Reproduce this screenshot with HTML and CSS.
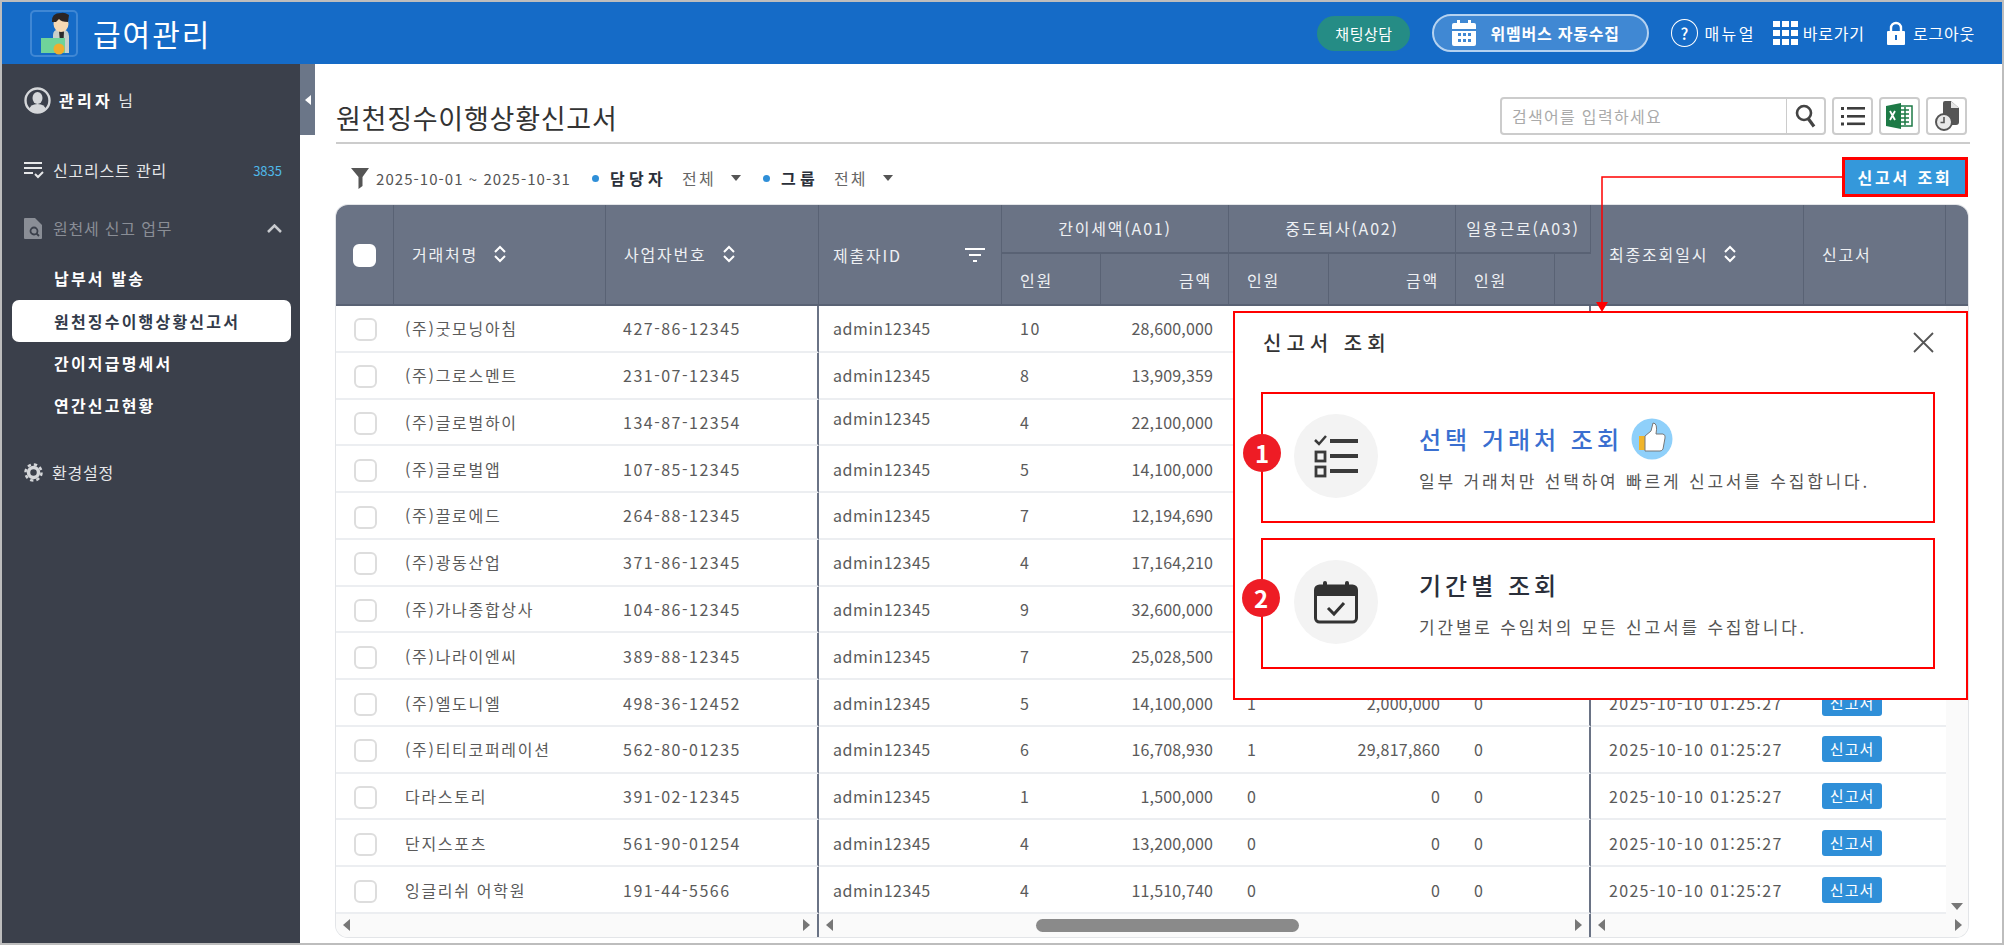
FILE: index.html
```html
<!DOCTYPE html>
<html lang="ko">
<head>
<meta charset="utf-8">
<title>급여관리</title>
<link rel="stylesheet" href="styles.css">
</head>
<body>
<div class="frame">
  <header class="topbar">
    <div class="brand">
      <span class="logo">
        <svg width="44" height="43" viewBox="0 0 44 43"><path d="M21 41V23q0-5 6-6h3q7 1 7 7v17z" fill="#c9cfca"/><path d="M27 19l2 22h2l1-22z" fill="#2b2b2b"/><ellipse cx="29" cy="12" rx="7.5" ry="8" fill="#f6d9b4"/><path d="M20 10q-1-9 9-9 3-1 8 2l-1 7q-7 0-9-3l-3 3z" fill="#2b2424"/><rect x="9" y="26" width="24" height="15" fill="#6fd39a"/><circle cx="27" cy="37" r="5.5" fill="#f0ad2e"/></svg>
      </span>
      <span class="app-name">급여관리</span>
    </div>
    <div class="top-actions">
      <span class="chat-pill">채팅상담</span>
      <span class="collect-pill">
        <svg width="24" height="26" viewBox="0 0 24 26"><path d="M5 0h3v4H5zM16 0h3v4h-3z" fill="#fff"/><path d="M0 5q0-2 2-2h20q2 0 2 2v4H0z" fill="#fff"/><path d="M0 11h24v13q0 2-2 2H2q-2 0-2-2z" fill="#fff"/><g fill="#4088d3"><rect x="6" y="13" width="3" height="3"/><rect x="11" y="13" width="3" height="3"/><rect x="16" y="13" width="3" height="3"/><rect x="6" y="19" width="3" height="3"/><rect x="11" y="19" width="3" height="3"/><rect x="16" y="19" width="3" height="3"/></g></svg>
        <span>위멤버스 자동수집</span>
      </span>
      <span class="top-link link-help"><span class="help-mark">?</span><span class="help-text">매뉴얼</span></span>
      <span class="top-link link-go">
        <svg width="25" height="24" viewBox="0 0 25 24" fill="#fff"><rect width="7" height="6"/><rect x="9" width="7" height="6"/><rect x="18" width="7" height="6"/><rect y="9" width="7" height="6"/><rect x="9" y="9" width="7" height="6"/><rect x="18" y="9" width="7" height="6"/><rect y="18" width="7" height="6"/><rect x="9" y="18" width="7" height="6"/><rect x="18" y="18" width="7" height="6"/></svg>
        바로가기
      </span>
      <span class="top-link link-out">
        <svg width="18" height="24" viewBox="0 0 18 24"><path d="M4 11V7a5 5 0 0 1 10 0v4" fill="none" stroke="#fff" stroke-width="2.4"/><rect y="10" width="18" height="14" rx="1" fill="#fff"/><rect x="8" y="14" width="2" height="5" fill="#156bc7"/></svg>
        로그아웃
      </span>
    </div>
  </header>

  <div class="body-row">
    <aside class="sidebar">
      <div class="nav-item nav-user">
        <svg width="27" height="27" viewBox="0 0 27 27"><circle cx="13.5" cy="13.5" r="12" fill="none" stroke="#d5d7da" stroke-width="2.4"/><ellipse cx="13.5" cy="11" rx="5" ry="6" fill="#d5d7da"/><path d="M5 23q1-6 8.500-6t8.500 6q-4 3-8.500 3T5 23z" fill="#d5d7da"/></svg>
        <span><b class="user-name">관리자</b> 님</span>
      </div>
      <div class="nav-item nav-list">
        <svg width="20" height="18" viewBox="0 0 20 18" fill="none" stroke="#e6e7e9" stroke-width="2"><path d="M0 2h18M0 7h18M0 12h9M11 13l3 3 5-5"/></svg>
        <span>신고리스트 관리</span>
        <span class="count">3835</span>
      </div>
      <div class="nav-item nav-group">
        <svg width="18" height="21" viewBox="0 0 18 21"><path d="M0 1q0-1 1-1h10l7 7v13q0 1-1 1H1q-1 0-1-1z" fill="#8a8e96"/><circle cx="10" cy="13" r="3.500" fill="none" stroke="#3b404b" stroke-width="1.800"/><path d="M12.500 15.500l2.500 2.500" stroke="#3b404b" stroke-width="1.800"/></svg>
        <span>원천세 신고 업무</span>
        <svg class="chevron" width="15" height="9" viewBox="0 0 15 9" fill="none" stroke="#c9cbcf" stroke-width="2.500"><path d="M1 8l6.500-6.500L14 8"/></svg>
      </div>
      <div class="nav-sub nav-sub-first">납부서 발송</div>
      <div class="nav-sub is-active">원천징수이행상황신고서</div>
      <div class="nav-sub">간이지급명세서</div>
      <div class="nav-sub">연간신고현황</div>
      <div class="nav-item nav-setting">
        <svg width="19" height="19" viewBox="0 0 19 19"><circle cx="9.500" cy="9.500" r="5" fill="none" stroke="#d5d7da" stroke-width="3.500"/><circle cx="9.500" cy="9.500" r="8" fill="none" stroke="#d5d7da" stroke-width="2.500" stroke-dasharray="3.300 3"/></svg>
        <span>환경설정</span>
      </div>
    </aside>

    <main class="main">
      <div class="title-row">
        <h1 class="page-title">원천징수이행상황신고서</h1>
        <div class="tools">
          <div class="search">
            <span class="search-text">검색어를 입력하세요</span>
            <span class="search-btn">
              <svg width="21" height="24" viewBox="0 0 21 24" fill="none" stroke="#444" stroke-width="2.600"><circle cx="9" cy="9" r="7"/><path d="M13.500 15l5.500 7.500" stroke-width="3.200"/></svg>
            </span>
          </div>
          <span class="tool-btn">
            <svg width="24" height="20" viewBox="0 0 24 20" fill="#3d3d3d"><rect width="3" height="3" y="1"/><rect x="6" y="1" width="18" height="2.600"/><rect width="3" height="3" y="9"/><rect x="6" y="9" width="18" height="2.600"/><rect width="3" height="3" y="16.500"/><rect x="6" y="16.500" width="18" height="2.600"/></svg>
          </span>
          <span class="tool-btn">
            <svg width="27" height="26" viewBox="0 0 27 26"><rect x="11" y="3" width="15" height="20" fill="#fff" stroke="#1d7a46" stroke-width="1.500"/><path d="M15 7h8M15 11h8M15 15h8M15 19h8M19 4v18" stroke="#1d7a46" stroke-width="1.500"/><path d="M0 3l15-3v26L0 23z" fill="#1d7a46"/><path d="M4 8l5 9M9 8l-5 9" stroke="#fff" stroke-width="1.800"/></svg>
          </span>
          <span class="tool-btn">
            <svg width="24" height="30" viewBox="0 0 24 30"><path d="M8 2q0-2 2-2h6l8 7v14q0 3-3 3H8z" fill="#555"/><path d="M16 0v7h8z" fill="#e5e5e5"/><circle cx="9" cy="21" r="8" fill="#e8e8e8" stroke="#555" stroke-width="2"/><path d="M9 16v5.500H5.500" fill="none" stroke="#555" stroke-width="1.600"/></svg>
          </span>
        </div>
      </div>

      <div class="filter-row">
        <div class="filters">
          <svg class="funnel" width="18" height="21" viewBox="0 0 18 21" fill="#555"><path d="M0 0h18l-6.500 9v9l-4 3V9z"/></svg>
          <span class="date-range">2025-10-01 ~ 2025-10-31</span>
          <i class="dot dot-a"></i><b class="f-label">담당자</b><span class="f-value">전체</span><i class="caret"></i>
          <i class="dot dot-b"></i><b class="f-label">그룹</b><span class="f-value">전체</span><i class="caret"></i>
        </div>
        <button class="query-btn" type="button">신고서 조회</button>
      </div>

      <div class="grid-box">
        <table class="grid">
          <colgroup>
            <col class="c-chk"><col class="c-name"><col class="c-biz"><col class="c-id">
            <col class="c-n1"><col class="c-a1"><col class="c-n2"><col class="c-a2"><col class="c-n3"><col class="c-a3">
            <col class="c-date"><col class="c-doc"><col class="c-vs">
          </colgroup>
          <thead>
            <tr class="h1">
              <th rowspan="2"><span class="chk chk-head"></span></th>
              <th rowspan="2" class="pad-l"><span class="sort">거래처명<svg width="14" height="18" viewBox="0 0 14 18" fill="none" stroke="#fff" stroke-width="2"><path d="M2 7l5-5 5 5M2 11l5 5 5-5"/></svg></span></th>
              <th rowspan="2" class="pad-l"><span class="sort">사업자번호<svg width="14" height="18" viewBox="0 0 14 18" fill="none" stroke="#fff" stroke-width="2"><path d="M2 7l5-5 5 5M2 11l5 5 5-5"/></svg></span></th>
              <th rowspan="2" class="pad-id"><span class="sort sort-wide">제출자ID<svg width="20" height="14" viewBox="0 0 20 14" fill="#fff"><rect width="20" height="2"/><rect x="4" y="6" width="12" height="2"/><rect x="8" y="12" width="4" height="2"/></svg></span></th>
              <th colspan="2" class="ctr">간이세액(A01)</th>
              <th colspan="2" class="ctr">중도퇴사(A02)</th>
              <th colspan="2" class="ctr">일용근로(A03)</th>
              <th rowspan="2" class="pad-l"><span class="sort">최종조회일시<svg width="14" height="18" viewBox="0 0 14 18" fill="none" stroke="#fff" stroke-width="2"><path d="M2 7l5-5 5 5M2 11l5 5 5-5"/></svg></span></th>
              <th rowspan="2" class="pad-l">신고서</th>
              <th rowspan="2"></th>
            </tr>
            <tr class="h2">
              <th class="pad-l">인원</th><th class="rgt">금액</th>
              <th class="pad-l">인원</th><th class="rgt">금액</th>
              <th class="pad-l">인원</th><th></th>
            </tr>
          </thead>
          <tbody>
            <tr><td class="ctr"><span class="chk"></span></td><td class="name">(주)굿모닝아침</td><td class="biz">427-86-12345</td><td class="uid">admin12345</td><td class="num">10</td><td class="amt">28,600,000</td><td></td><td></td><td></td><td class="edge"></td><td></td><td></td><td class="vs"></td></tr>
            <tr><td class="ctr"><span class="chk"></span></td><td class="name">(주)그로스멘트</td><td class="biz">231-07-12345</td><td class="uid">admin12345</td><td class="num">8</td><td class="amt">13,909,359</td><td></td><td></td><td></td><td class="edge"></td><td></td><td></td><td class="vs"></td></tr>
            <tr><td class="ctr"><span class="chk"></span></td><td class="name">(주)글로벌하이</td><td class="biz">134-87-12354</td><td class="uid uid-up">admin12345</td><td class="num">4</td><td class="amt">22,100,000</td><td></td><td></td><td></td><td class="edge"></td><td></td><td></td><td class="vs"></td></tr>
            <tr><td class="ctr"><span class="chk"></span></td><td class="name">(주)글로벌앱</td><td class="biz">107-85-12345</td><td class="uid">admin12345</td><td class="num">5</td><td class="amt">14,100,000</td><td></td><td></td><td></td><td class="edge"></td><td></td><td></td><td class="vs"></td></tr>
            <tr><td class="ctr"><span class="chk"></span></td><td class="name">(주)끌로에드</td><td class="biz">264-88-12345</td><td class="uid">admin12345</td><td class="num">7</td><td class="amt">12,194,690</td><td></td><td></td><td></td><td class="edge"></td><td></td><td></td><td class="vs"></td></tr>
            <tr><td class="ctr"><span class="chk"></span></td><td class="name">(주)광동산업</td><td class="biz">371-86-12345</td><td class="uid">admin12345</td><td class="num">4</td><td class="amt">17,164,210</td><td></td><td></td><td></td><td class="edge"></td><td></td><td></td><td class="vs"></td></tr>
            <tr><td class="ctr"><span class="chk"></span></td><td class="name">(주)가나종합상사</td><td class="biz">104-86-12345</td><td class="uid">admin12345</td><td class="num">9</td><td class="amt">32,600,000</td><td></td><td></td><td></td><td class="edge"></td><td></td><td></td><td class="vs"></td></tr>
            <tr><td class="ctr"><span class="chk"></span></td><td class="name">(주)나라이엔씨</td><td class="biz">389-88-12345</td><td class="uid">admin12345</td><td class="num">7</td><td class="amt">25,028,500</td><td></td><td></td><td></td><td class="edge"></td><td></td><td></td><td class="vs"></td></tr>
            <tr><td class="ctr"><span class="chk"></span></td><td class="name">(주)엘도니엘</td><td class="biz">498-36-12452</td><td class="uid">admin12345</td><td class="num">5</td><td class="amt">14,100,000</td><td class="num">1</td><td class="amt amt2">2,000,000</td><td class="num">0</td><td class="edge"></td><td class="date">2025-10-10 01:25:27</td><td class="doc"><span class="doc-btn">신고서</span></td><td class="vs"></td></tr>
            <tr><td class="ctr"><span class="chk"></span></td><td class="name">(주)티티코퍼레이션</td><td class="biz">562-80-01235</td><td class="uid">admin12345</td><td class="num">6</td><td class="amt">16,708,930</td><td class="num">1</td><td class="amt amt2">29,817,860</td><td class="num">0</td><td class="edge"></td><td class="date">2025-10-10 01:25:27</td><td class="doc"><span class="doc-btn">신고서</span></td><td class="vs"></td></tr>
            <tr><td class="ctr"><span class="chk"></span></td><td class="name">다라스토리</td><td class="biz">391-02-12345</td><td class="uid">admin12345</td><td class="num">1</td><td class="amt">1,500,000</td><td class="num">0</td><td class="amt amt2">0</td><td class="num">0</td><td class="edge"></td><td class="date">2025-10-10 01:25:27</td><td class="doc"><span class="doc-btn">신고서</span></td><td class="vs"></td></tr>
            <tr><td class="ctr"><span class="chk"></span></td><td class="name">단지스포츠</td><td class="biz">561-90-01254</td><td class="uid">admin12345</td><td class="num">4</td><td class="amt">13,200,000</td><td class="num">0</td><td class="amt amt2">0</td><td class="num">0</td><td class="edge"></td><td class="date">2025-10-10 01:25:27</td><td class="doc"><span class="doc-btn">신고서</span></td><td class="vs"></td></tr>
            <tr><td class="ctr"><span class="chk"></span></td><td class="name">잉글리쉬 어학원</td><td class="biz">191-44-5566</td><td class="uid">admin12345</td><td class="num">4</td><td class="amt">11,510,740</td><td class="num">0</td><td class="amt amt2">0</td><td class="num">0</td><td class="edge"></td><td class="date">2025-10-10 01:25:27</td><td class="doc"><span class="doc-btn">신고서</span></td><td class="vs"><i class="tri tri-down"></i></td></tr>
          </tbody>
        </table>
        <div class="scrolls">
          <div class="pane pane-l"><i class="tri tri-left"></i><i class="tri tri-right"></i></div>
          <div class="pane pane-m"><i class="tri tri-left"></i><span class="thumb"></span><i class="tri tri-right"></i></div>
          <div class="pane pane-r"><i class="tri tri-left"></i><i class="tri tri-right"></i></div>
        </div>
      </div>
    </main>
  </div>

  <span class="side-toggle"><i class="toggle-tri"></i></span>

  <svg class="callout" width="260" height="150" viewBox="0 0 260 150"><path d="M248 7H8V136" fill="none" stroke="#f00" stroke-width="1.500"/><path d="M2 132h12l-6 10z" fill="#f00"/></svg>

  <section class="modal">
    <div class="modal-head">
      <h2 class="modal-title">신고서 조회</h2>
      <svg width="21" height="21" viewBox="0 0 21 21" fill="none" stroke="#555" stroke-width="1.800"><path d="M1 1l19 19M20 1L1 20"/></svg>
    </div>
    <div class="option option-1">
      <span class="badge badge-1">1</span>
      <span class="op-icon">
        <svg width="44" height="44" viewBox="0 0 44 44" fill="none" stroke="#3a3a3a"><path d="M1 6l4 4 7-8" stroke-width="2.500"/><path d="M16 7h28M16 22h28M16 37h28" stroke-width="4"/><rect x="2" y="18" width="9" height="9" stroke-width="2.800"/><rect x="2" y="33" width="9" height="9" stroke-width="2.800"/></svg>
      </span>
      <div class="op-text">
        <div class="op-title is-blue">선택 거래처 조회
          <svg class="thumbup" width="42" height="42" viewBox="0 0 42 42"><circle cx="21" cy="21" r="20.500" fill="#8fd0fa"/><rect x="8" y="18" width="6" height="14" fill="#f0b429"/><path d="M14 18l6-5 2-8q5 0 3 11h7q3 1 2 4l-2 11q-1 2-3 2H14z" fill="#fff" stroke="#777" stroke-width="1"/></svg>
        </div>
        <p class="op-desc">일부 거래처만 선택하여 빠르게 신고서를 수집합니다.</p>
      </div>
    </div>
    <div class="option option-2">
      <span class="badge badge-2">2</span>
      <span class="op-icon">
        <svg width="44" height="44" viewBox="0 0 44 44"><rect x="1.500" y="6" width="41" height="36" rx="4" fill="none" stroke="#333" stroke-width="3"/><path d="M1.500 10q0-4 4-4h33q4 0 4 4v6h-41z" fill="#333"/><rect x="9" y="1" width="4" height="9" rx="2" fill="#333"/><rect x="31" y="1" width="4" height="9" rx="2" fill="#333"/><path d="M14 28l6 6 10-11" fill="none" stroke="#333" stroke-width="3"/></svg>
      </span>
      <div class="op-text">
        <div class="op-title">기간별 조회</div>
        <p class="op-desc">기간별로 수임처의 모든 신고서를 수집합니다.</p>
      </div>
    </div>
  </section>
</div>
</body>
</html>
```

FILE: styles.css
```css
* { box-sizing: border-box; }
html, body { margin: 0; padding: 0; }
body {
  font-family: "Noto Sans CJK KR", "Noto Sans", sans-serif;
  color: #555;
  background: #bdbdbd;
  overflow: hidden;
}
.frame {
  position: relative;
  width: 2000px;
  height: 941px;
  margin: 2px;
  background: #fff;
  display: flex;
  flex-direction: column;
}

/* top bar */
.topbar {
  height: 62px;
  flex: none;
  background: #156bc7;
  display: flex;
  align-items: center;
  justify-content: space-between;
  color: #fff;
}
.brand { display: flex; align-items: center; margin-left: 28px; }
.logo {
  width: 48px;
  height: 47px;
  border: 2px solid #3f87d4;
  border-radius: 5px;
  display: flex;
  align-items: center;
  justify-content: center;
}
.app-name { margin-left: 15px; font-size: 30px; letter-spacing: 2px; line-height: 40px; }
.top-actions { display: flex; align-items: center; margin-right: 27px; }
.chat-pill {
  width: 93px;
  height: 35px;
  border-radius: 18px;
  background: #258c85;
  font-size: 15px;
  letter-spacing: .5px;
  display: flex;
  align-items: center;
  justify-content: center;
}
.collect-pill {
  margin-left: 22px;
  width: 217px;
  height: 38px;
  border-radius: 19px;
  border: 2px solid #b5d2f0;
  background: #4088d3;
  display: flex;
  align-items: center;
  padding-left: 18px;
  font-size: 16px;
  font-weight: 700;
  letter-spacing: .8px;
}
.collect-pill span { margin-left: 14px; }
.top-link { display: flex; align-items: center; font-size: 16px; letter-spacing: .8px; }
.top-link svg { flex: none; }
.link-help { margin-left: 22px; }
.help-mark {
  width: 27px;
  height: 28px;
  margin-right: 6px;
  border: 1.5px solid #fff;
  border-radius: 50%;
  display: flex;
  align-items: center;
  justify-content: center;
  font-size: 16px;
  font-weight: 500;
}
.help-text { letter-spacing: 2.400px; }
.link-go { margin-left: 17px; }
.link-go svg { margin-right: 5px; }
.link-out { margin-left: 22px; }
.link-out svg { margin-right: 8px; }

/* body */
.body-row { flex: 1; display: flex; min-height: 0; }
.sidebar {
  width: 298px;
  flex: none;
  background: #3b404b;
  padding-top: 15px;
  color: #e6e7e9;
  font-size: 16px;
  letter-spacing: .8px;
}
.nav-item {
  height: 42px;
  display: flex;
  align-items: center;
  padding: 0 18px 0 22px;
}
.nav-user svg { margin-right: 8px; }
.user-name { letter-spacing: 3.3px; color: #fff; }
.nav-list { margin-top: 28px; }
.nav-list svg, .nav-setting svg { margin-right: 9px; }
.count { margin-left: auto; font-size: 13px; letter-spacing: 0; color: #4fb8e8; }
.nav-group { margin-top: 16px; color: #8a8e96; }
.nav-group svg { margin-right: 11px; }
.nav-group .chevron { margin: 0 0 0 auto; }
.nav-sub {
  height: 42px;
  margin: 0 9px 0 10px;
  padding-left: 42px;
  display: flex;
  align-items: center;
  font-weight: 700;
  color: #fff;
  letter-spacing: 2.2px;
  border-radius: 7px;
}
.nav-sub-first { margin-top: 8px; margin-bottom: 1px; }
.nav-sub.is-active { background: #fff; color: #333b4a; }
.nav-setting { margin-top: 25px; }

.side-toggle {
  position: absolute;
  left: 298px;
  top: 62px;
  width: 15px;
  height: 71px;
  background: #6b7688;
  display: flex;
  align-items: center;
  justify-content: center;
}
.toggle-tri {
  border-style: solid;
  border-width: 5px 6px 5px 0;
  border-color: transparent #fff transparent transparent;
}

/* main */
.main { flex: 1; min-width: 0; padding: 33px 32px 0 36px; }
.title-row {
  height: 47px;
  border-bottom: 2px solid #ccc;
  display: flex;
  justify-content: space-between;
  align-items: flex-start;
}
.page-title {
  margin: 1px 0 0;
  font-size: 27px;
  font-weight: 400;
  letter-spacing: .75px;
  line-height: 40px;
  color: #333;
}
.tools { display: flex; gap: 6px; margin-right: 3px; }
.search {
  width: 326px;
  height: 38px;
  border: 2px solid #ccc;
  border-radius: 4px;
  display: flex;
  align-items: center;
}
.search-text { flex: 1; padding-left: 10px; color: #aaa; font-size: 16px; letter-spacing: 1.3px; }
.search-btn {
  width: 38px;
  height: 100%;
  border-left: 1.5px solid #ccc;
  display: flex;
  align-items: center;
  justify-content: center;
}
.tool-btn {
  width: 41px;
  height: 38px;
  border: 2px solid #ccc;
  border-radius: 4px;
  display: flex;
  align-items: center;
  justify-content: center;
}
.filter-row {
  margin-top: 13px;
  height: 40px;
  display: flex;
  justify-content: space-between;
  align-items: center;
}
.filters { display: flex; align-items: center; padding: 2px 0 0 15px; font-size: 15px; }
.funnel { margin-right: 7px; }
.date-range { letter-spacing: 1.05px; color: #555; }
.dot { width: 7px; height: 7px; border-radius: 50%; background: #2f8fd8; }
.dot-a { margin-left: 21px; margin-right: 11px; }
.dot-b { margin-left: 22px; margin-right: 11px; }
.f-label { color: #2a2f3a; font-size: 16px; letter-spacing: 4.300px; }
.f-value { margin-left: 15px; font-size: 16px; letter-spacing: 2.2px; color: #666; }
.caret {
  margin-left: 15px;
  border-style: solid;
  border-width: 6px 5px 0;
  border-color: #555 transparent transparent;
}
.query-btn {
  width: 126px;
  height: 40px;
  margin-right: 2px;
  border: 3px solid #f00;
  background: #3498db;
  color: #fff;
  font: 700 16px "Noto Sans CJK KR", sans-serif;
  letter-spacing: 2.8px;
  padding: 0;
}

/* grid */
.grid-box {
  margin-top: 8px;
  width: 1632px;
  border-radius: 12px;
  overflow: hidden;
  box-shadow: 0 0 0 1px #e3e5e8;
}
.grid {
  table-layout: fixed;
  width: 1632px;
  border-collapse: separate;
  border-spacing: 0;
  font-size: 16px;
}
.c-chk { width: 58px; } .c-name { width: 212px; } .c-biz { width: 213px; } .c-id { width: 183px; }
.c-n1 { width: 99px; } .c-a1 { width: 128px; } .c-n2 { width: 100px; } .c-a2 { width: 127px; }
.c-n3 { width: 99px; } .c-a3 { width: 36px; } .c-date { width: 213px; } .c-doc { width: 142px; } .c-vs { width: 22px; }
.grid th {
  background: #6a7385;
  color: #eef0f3;
  font-weight: 400;
  font-size: 16px;
  letter-spacing: 1.8px;
  text-align: left;
  white-space: nowrap;
  padding: 0;
  border-right: 1px solid #596274;
  border-bottom: 2px solid #596274;
}
.h1 th { height: 49px; padding-bottom: 1px; }
.h2 th { height: 52px; padding-top: 1px; }
.h1 th.ctr { border-bottom: 2px solid #596274; text-align: center; }
.grid th.pad-l { padding-left: 18px; }
.grid th.pad-id { padding: 0 16px 0 14px; }
.grid th.rgt { text-align: right; padding-right: 16px; }
.grid th:last-child { border-right: 0; }
.sort { display: inline-flex; align-items: center; gap: 15px; }
.sort-wide { display: flex; justify-content: space-between; }
.chk {
  display: inline-block;
  width: 23px;
  height: 23px;
  border: 2px solid #ddd;
  border-radius: 6px;
  background: #fff;
  vertical-align: middle;
}
.chk-head { border-color: #fff; margin-left: 17px; }
.grid td {
  height: 46.77px;
  padding: 0;
  border-bottom: 2px solid #eceef1;
  letter-spacing: 1.5px;
  white-space: nowrap;
  color: #5a5a5a;
}
.grid td.ctr { text-align: center; }
.grid td.name { padding-left: 11px; letter-spacing: 1.7px; }
.grid td.biz { padding-left: 17px; border-right: 2px solid #6a7385; }
.grid td.uid { padding-left: 14px; letter-spacing: .55px; }
.grid td.uid-up { padding-bottom: 7px; }
.grid td.num { padding-left: 18px; }
.grid td.amt { text-align: right; padding-right: 16px; letter-spacing: .15px; }
.grid td.amt2 { padding-right: 16px; letter-spacing: .25px; }
.grid td.edge { border-right: 2px solid #6a7385; }
.grid td.date { padding-left: 18px; letter-spacing: 1.3px; }
.grid td.doc { padding-left: 18px; }
.grid td.vs { border-bottom: 0; background: #fafafa; text-align: center; vertical-align: bottom; line-height: 0; padding-bottom: 4px; }
.doc-btn {
  display: inline-block;
  width: 60px;
  height: 26px;
  border-radius: 3px;
  background: #2f8fd8;
  color: #fff;
  font-size: 15px;
  line-height: 26px;
  text-align: center;
  letter-spacing: 1px;
}
.scrolls { display: flex; height: 23px; background: #fafafa; }
.pane {
  display: flex;
  align-items: center;
  justify-content: space-between;
  padding: 0 7px;
}
.pane-l { width: 483px; border-right: 2px solid #6a7385; }
.pane-m { width: 772px; border-right: 2px solid #6a7385; }
.pane-r { flex: 1; padding-right: 6px; }
.thumb { width: 263px; height: 13px; border-radius: 7px; background: #8a8a8a; margin-left: 198px; margin-right: 272px; }
.tri { display: inline-block; border-style: solid; }
.tri-left { border-width: 6px 7px 6px 0; border-color: transparent #777 transparent transparent; }
.tri-right { border-width: 6px 0 6px 7px; border-color: transparent transparent transparent #777; }
.tri-down { border-width: 7px 6px 0; border-color: #777 transparent transparent; }

/* annotation and modal */
.callout { position: absolute; left: 1592px; top: 168px; }
.modal {
  position: absolute;
  left: 1231px;
  top: 309px;
  width: 735px;
  height: 389px;
  background: #fff;
  border: 2.500px solid #f00;
  padding: 0 31px 0 26px;
}
.modal-head {
  height: 78.5px;
  display: flex;
  align-items: center;
  justify-content: space-between;
  padding: 0 0 20px 2px;
}
.modal-head svg { margin-right: 1px; }
.modal-title { margin: 0; font-size: 20px; font-weight: 500; letter-spacing: 5px; color: #333; }
.option {
  position: relative;
  height: 131px;
  border: 2px solid #f00;
  display: flex;
  align-items: center;
  padding-left: 31px;
}
.option-2 { margin-top: 15px; height: 131.5px; }
.badge {
  position: absolute;
  width: 38px;
  height: 38px;
  border-radius: 50%;
  background: #ee1c25;
  color: #fff;
  font-size: 24px;
  font-weight: 700;
  display: flex;
  align-items: center;
  justify-content: center;
}
.badge-1 { left: -20px; top: 40px; }
.badge-2 { left: -21px; top: 39px; }
.op-icon {
  flex: none;
  width: 84px;
  height: 84px;
  margin-top: -2px;
  border-radius: 50%;
  background: #f3f3f3;
  display: flex;
  align-items: center;
  justify-content: center;
}
.op-text { margin-left: 41px; padding-bottom: 3px; }
.op-title {
  height: 42px;
  display: flex;
  align-items: center;
  font-size: 24px;
  font-weight: 500;
  letter-spacing: 4px;
  color: #2a2f3a;
}
.op-title.is-blue { color: #3a6fd0; }
.thumbup { margin-left: 8px; }
.op-desc { margin: 8px 0 0; font-size: 17px; letter-spacing: 2.8px; color: #555; line-height: 26px; }
```
